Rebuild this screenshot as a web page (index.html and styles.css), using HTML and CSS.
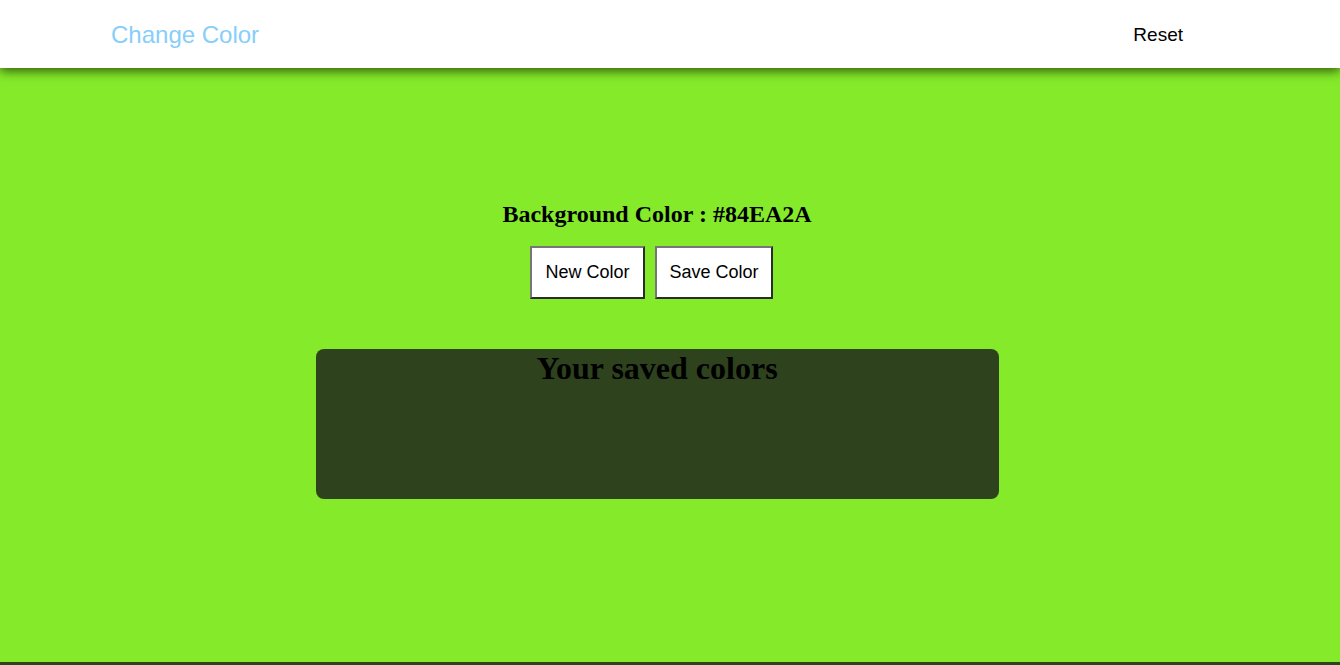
FILE: index.html
```html
<!DOCTYPE html>
<html>
<head>
<meta charset="utf-8">
<link rel="stylesheet" href="styles.css">
</head>
<body>
<header class="topbar">
  <a class="brand">Change Color</a>
  <a class="reset">Reset</a>
</header>
<main class="main">
  <h2 class="current">Background Color : #84EA2A</h2>
  <div class="actions">
    <button class="btn">New Color</button>
    <button class="btn">Save Color</button>
  </div>
  <section class="saved">
    <h1 class="saved-title">Your saved colors</h1>
  </section>
</main>
<footer class="footer"></footer>
</body>
</html>
```
FILE: styles.css
```css
html, body {
  margin: 0;
  padding: 0;
  height: 100%;
}
body {
  background: #84ea2a;
  font-family: "Liberation Serif", "Times New Roman", serif;
  display: flex;
  flex-direction: column;
  overflow: hidden;
}
.topbar {
  height: 68px;
  background: #fff;
  display: flex;
  align-items: center;
  justify-content: space-between;
  padding: 0 157px 0 111px;
  box-shadow: 0 3px 10px rgba(20, 40, 0, 0.75);
  position: relative;
  z-index: 1;
  flex: none;
}
.brand {
  color: #87cefa;
  font-family: "Liberation Sans", Arial, sans-serif;
  font-size: 24px;
  margin-top: 1px;
}
.reset {
  color: #000;
  font-family: "Liberation Sans", Arial, sans-serif;
  font-size: 19px;
  margin-top: 1px;
}
.main {
  flex: 1;
  display: flex;
  flex-direction: column;
  align-items: center;
  padding: 132px 26px 0 0;
}
.current {
  margin: 0;
  font-size: 24px;
  font-weight: bold;
  line-height: 28px;
}
.actions {
  display: flex;
  gap: 10px;
  margin-top: 18px;
  margin-right: 11px;
}
.btn {
  height: 53px;
  padding: 0 10px;
  background: #fff;
  font-family: "Liberation Sans", Arial, sans-serif;
  font-size: 18px;
  color: #000;
  border: 2px solid;
  border-color: #767676 #2b2b2b #2b2b2b #767676;
}
.btn:first-child {
  width: 115px;
}
.btn:last-child {
  width: 118px;
}
.saved {
  margin-top: 50px;
  width: 683px;
  height: 150px;
  background: #2e431d;
  border-radius: 8px;
}
.saved-title {
  margin: 0;
  text-align: center;
  font-size: 32px;
  font-weight: bold;
  line-height: 38px;
}
.footer {
  height: 3px;
  background: #2e431d;
  flex: none;
}
```
